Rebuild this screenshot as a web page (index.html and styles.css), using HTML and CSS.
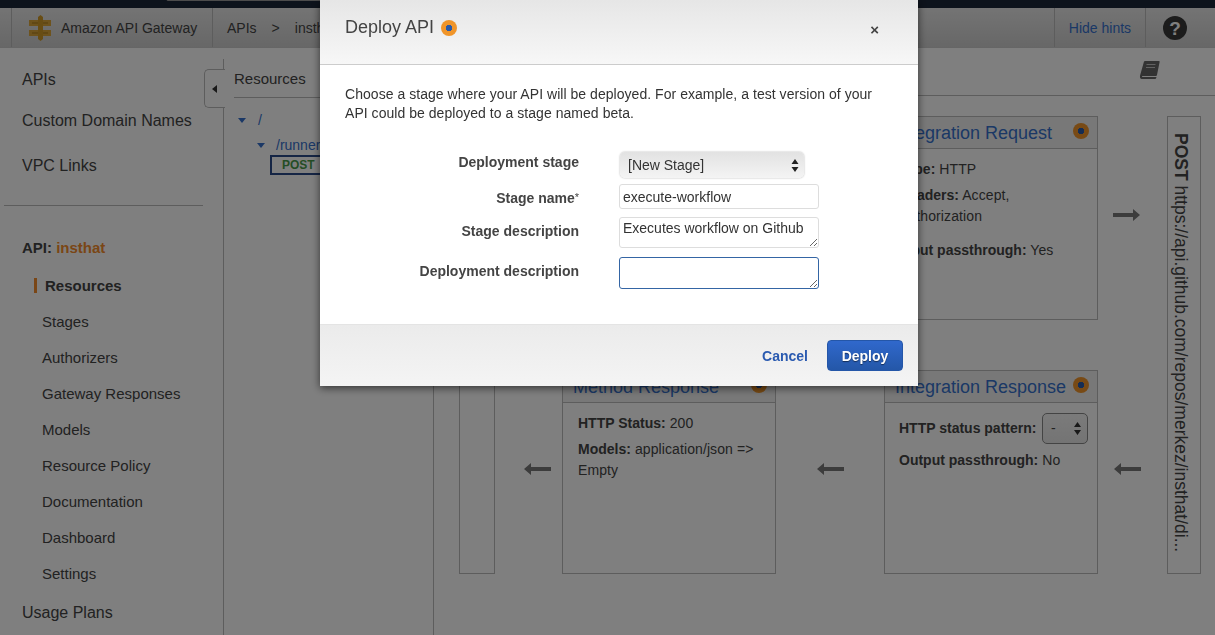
FILE: index.html
```html
<!DOCTYPE html>
<html lang="en">
<head>
  <meta charset="UTF-8" />
  <title>Amazon API Gateway</title>
  <link rel="stylesheet" href="styles.css">
</head>
<body>

  <div class="topbar"><div class="search-edge"></div></div>

  <header class="header">
    <div class="brand">
      <svg class="logo" width="24" height="26" viewBox="0 0 24 26">
        <rect x="1" y="5" width="9" height="6" fill="#dca63a"/>
        <rect x="1" y="15" width="9" height="6" fill="#dca63a"/>
        <rect x="15" y="5" width="8" height="6" fill="#dca63a"/>
        <rect x="15" y="15" width="8" height="6" fill="#dca63a"/>
        <path d="M4 8h16M4 18h16" stroke="#a87c1c" stroke-width="1"/>
        <path d="M10 2l2.500-2L15 2v22l-2.500 2L10 24z" fill="#d09a28"/>
      </svg>
      <span>Amazon API Gateway</span>
    </div>
    <nav class="crumbs"><span>APIs</span><span class="sep">&gt;</span><span>insthat</span></nav>
    <a class="hints">Hide hints</a>
    <div class="help">
      <svg width="24" height="24" viewBox="0 0 24 24">
        <circle cx="12" cy="12" r="12" fill="#383838"/>
        <text x="12" y="18.500" class="help-mark">?</text>
      </svg>
    </div>
  </header>

  <div class="layout">
    <aside class="sidebar">
      <a class="nav-top first">APIs</a>
      <a class="nav-top custom">Custom Domain Names</a>
      <a class="nav-top vpc">VPC Links</a>
      <hr class="nav-rule">
      <div class="api-name">API: <span>insthat</span></div>
      <ul class="sub-nav">
        <li class="active">Resources</li>
        <li>Stages</li>
        <li>Authorizers</li>
        <li>Gateway Responses</li>
        <li>Models</li>
        <li>Resource Policy</li>
        <li>Documentation</li>
        <li>Dashboard</li>
        <li>Settings</li>
      </ul>
      <a class="nav-top usage">Usage Plans</a>
    </aside>

    <section class="resources">
      <div class="collapse-tab">
        <svg width="6" height="8" viewBox="0 0 6 8"><path d="M5 0v8L0 4z" fill="#333"/></svg>
      </div>
      <h3>Resources</h3>
      <ul class="tree">
        <li><i class="caret"></i><a>/</a></li>
        <li class="child"><i class="caret"></i><a>/runners</a></li>
      </ul>
      <div class="method-tag">POST</div>
    </section>

    <main class="main">
      <div class="toolbar">
        <svg width="21" height="20" viewBox="0 0 21 20">
          <path d="M5 1.500Q5.300 1 6 1h14q.8 0 .6 1L18 15q-.2 1-1 1H2q-1 0-.8-1z" fill="#666"/>
          <path d="M1.200 15C.6 17 1 19 3 19h13q1 0 1.200-1l.3-1H4q-1.500 0-1-1z" fill="#666"/>
          <path d="M7.500 4.500h9M7 7.500h9" stroke="#c4c4c4" stroke-width="1.200"/>
        </svg>
      </div>
      <div class="flow">
        <div class="client"></div>
        <div class="arrow a1"><svg width="27" height="12" viewBox="0 0 27 12"><path d="M0 4h20V0l7 6-7 6V8H0z" class="arrow-fill"/></svg></div>
        <div class="card method-request">
          <div class="card-head"><a>Method Request</a><i class="dot"></i></div>
        </div>
        <div class="arrow a2"><svg width="27" height="12" viewBox="0 0 27 12"><path d="M0 4h20V0l7 6-7 6V8H0z" class="arrow-fill"/></svg></div>
        <div class="card integration-request">
          <div class="card-head"><a>Integration Request</a><i class="dot"></i></div>
          <div class="card-body">
            <p><b>Type:</b> HTTP</p>
            <p><b>Headers:</b> Accept,<br>Authorization</p>
            <p class="spaced"><b>Input passthrough:</b> Yes</p>
          </div>
        </div>
        <div class="arrow a3"><svg width="27" height="12" viewBox="0 0 27 12"><path d="M0 4h20V0l7 6-7 6V8H0z" class="arrow-fill"/></svg></div>
        <div class="endpoint"><span><b>POST</b> https://api.github.com/repos/merkez/insthat/di...</span></div>

        <div class="arrow a4"><svg width="27" height="12" viewBox="0 0 27 12"><path d="M27 4H7V0L0 6l7 6V8h20z" class="arrow-fill"/></svg></div>
        <div class="card method-response">
          <div class="card-head"><a>Method Response</a><i class="dot"></i></div>
          <div class="card-body">
            <p><b>HTTP Status:</b> 200</p>
            <p><b>Models:</b> application/json =&gt;<br>Empty</p>
          </div>
        </div>
        <div class="arrow a5"><svg width="27" height="12" viewBox="0 0 27 12"><path d="M27 4H7V0L0 6l7 6V8h20z" class="arrow-fill"/></svg></div>
        <div class="card integration-response">
          <div class="card-head"><a>Integration Response</a><i class="dot"></i></div>
          <div class="card-body">
            <div class="pattern-row"><b>HTTP status pattern:</b>
              <div class="mini-select">-
                <svg width="7" height="13" viewBox="0 0 7 13"><path d="M3.500 0 7 5H0zM3.500 13 0 8h7z" fill="#333"/></svg>
              </div>
            </div>
            <p><b>Output passthrough:</b> No</p>
          </div>
        </div>
        <div class="arrow a6"><svg width="27" height="12" viewBox="0 0 27 12"><path d="M27 4H7V0L0 6l7 6V8h20z" class="arrow-fill"/></svg></div>
      </div>
    </main>
  </div>

  <div class="overlay"></div>

  <div class="modal">
    <div class="modal-head">
      <h2>Deploy API</h2>
      <i class="dot"></i>
      <span class="close">&times;</span>
    </div>
    <div class="modal-body">
      <p class="intro">Choose a stage where your API will be deployed. For example, a test version of your API could be deployed to a stage named beta.</p>
      <form class="deploy-form">
        <label class="row-stage">Deployment stage</label>
        <div class="stage-select row-stage">
          <span>[New Stage]</span>
          <svg width="8" height="13" viewBox="0 0 8 13"><path d="M4 0l3.500 5H.5zM4 13 .5 8h7z" fill="#222"/></svg>
        </div>
        <label class="row-name">Stage name<sup>*</sup></label>
        <input class="field single row-name" type="text" value="execute-workflow">
        <label class="row-desc">Stage description</label>
        <textarea class="field area row-desc">Executes workflow on Github</textarea>
        <label class="row-deploy">Deployment description</label>
        <textarea class="field area focused row-deploy"></textarea>
      </form>
    </div>
    <div class="modal-foot">
      <a class="cancel">Cancel</a>
      <button class="deploy" type="button">Deploy</button>
    </div>
  </div>

</body>
</html>
```

FILE: styles.css
```css
* {
  box-sizing: border-box;
}
html, body {
  height: 635px;
  margin: 0;
  overflow: hidden;
}
body {
  font-family: "Liberation Sans", Arial, sans-serif;
  font-size: 14px;
  color: #444;
  background: #fff;
}
a {
  color: #3670cc;
}

/* top of the console */
.topbar {
  height: 8px;
  background: #1b2638;
  position: relative;
}
.search-edge {
  position: absolute;
  left: 166px;
  top: -4px;
  width: 170px;
  height: 5px;
  border: 1px solid #999;
  border-radius: 2px;
}
.header {
  height: 40px;
  display: flex;
  align-items: center;
  padding-left: 11px;
  background: linear-gradient(#e8e8e8, #cfcfcf);
  border-bottom: 1px solid #ccc;
}
.brand {
  width: 202px;
  height: 100%;
  display: flex;
  align-items: center;
  padding-left: 16px;
  gap: 9px;
  border-left: 1px solid #bbb;
  border-right: 1px solid #bbb;
}
.crumbs {
  flex: 1;
  padding-left: 14px;
  display: flex;
  gap: 15px;
}
.hints {
  width: 92px;
  height: 100%;
  display: flex;
  align-items: center;
  justify-content: center;
  border-left: 1px solid #bbb;
  border-right: 1px solid #bbb;
}
.help {
  width: 69px;
  padding-left: 17px;
  display: flex;
  align-items: center;
}
.help-mark {
  font-family: "Liberation Sans", Arial, sans-serif;
  font-size: 19px;
  font-weight: bold;
  fill: #fff;
  text-anchor: middle;
}

/* page columns */
.layout {
  display: flex;
  height: 587px;
  background: #fff;
}
.sidebar {
  width: 224px;
  flex: none;
  padding-top: 23px;
  position: relative;
}
.sidebar::after {
  content: "";
  position: absolute;
  right: 0;
  top: 11px;
  bottom: 0;
  width: 1px;
  background: #bbb;
}
.nav-top {
  display: block;
  padding-left: 22px;
  font-size: 16px;
  line-height: 18px;
  color: #444;
}
.custom {
  margin-top: 23px;
}
.vpc {
  margin-top: 27px;
}
.nav-rule {
  margin: 30px 21px 0 4px;
  border: 0;
  border-top: 1px solid #bbb;
}
.api-name {
  margin-top: 33px;
  padding-left: 22px;
  font-size: 15px;
  font-weight: bold;
  line-height: 18px;
}
.api-name span {
  color: #f58c2c;
}
.sub-nav {
  list-style: none;
  margin: 20px 0 0;
  padding: 0 0 0 42px;
  font-size: 15px;
}
.sub-nav li {
  height: 36px;
  line-height: 18px;
}
.sub-nav .active {
  font-weight: bold;
  position: relative;
  padding-left: 3px;
}
.sub-nav .active::before {
  content: "";
  position: absolute;
  left: -8px;
  top: 1px;
  width: 3px;
  height: 15px;
  background: #f58c2c;
}
.usage {
  margin-top: 3px;
}

.resources {
  width: 210px;
  flex: none;
  padding-left: 10px;
  position: relative;
  border-right: 1px solid #bbb;
}
.resources h3 {
  margin: 0;
  height: 50px;
  padding-top: 22px;
  font-size: 15px;
  font-weight: normal;
  line-height: 18px;
  border-bottom: 1px solid #bbb;
}
.collapse-tab {
  position: absolute;
  left: -20px;
  top: 21px;
  width: 21px;
  height: 39px;
  display: flex;
  align-items: center;
  padding-left: 7px;
  background: #fff;
  border: 1px solid #bbb;
  border-right: 0;
  border-radius: 5px 0 0 5px;
}
.tree {
  list-style: none;
  margin: 10px 0 0;
  padding: 0 0 0 4px;
}
.tree li {
  height: 24px;
  line-height: 18px;
  display: flex;
  align-items: center;
  gap: 12px;
}
.tree .child {
  height: 25px;
  padding: 1px 0 0 19px;
  gap: 11px;
}
.caret {
  border-left: 4px solid transparent;
  border-right: 4px solid transparent;
  border-top: 5px solid #3670cc;
}
.method-tag {
  width: 120px;
  height: 20px;
  margin: -2px 0 0 36px;
  padding-left: 10px;
  border: 2px solid #2a4a8a;
  font-size: 12px;
  font-weight: bold;
  line-height: 16px;
  color: #4a9a4a;
}

.main {
  flex: 1;
}
.toolbar {
  height: 48px;
  padding: 12px 0 0 705px;
  border-bottom: 1px solid #bbb;
}
.flow {
  display: grid;
  grid-template-columns: 36px 67px 214px 108px 214px 69px 34px;
  grid-template-rows: 204px 50px 204px;
  margin: 20px 0 0 25px;
}
.client {
  grid-column: 1;
  grid-row: 1 / 4;
  border: 1px solid #bbb;
}
.endpoint {
  grid-column: 7;
  grid-row: 1 / 4;
  border: 1px solid #bbb;
  padding: 16px 9px 0 0;
  font-size: 17.500px;
  line-height: 20px;
  white-space: nowrap;
  writing-mode: vertical-rl;
  display: flex;
  align-items: flex-start;
}
.card {
  border: 1px solid #bbb;
}
.method-request {
  grid-column: 3;
  grid-row: 1;
}
.integration-request {
  grid-column: 5;
  grid-row: 1;
}
.method-response {
  grid-column: 3;
  grid-row: 3;
}
.integration-response {
  grid-column: 5;
  grid-row: 3;
}
.integration-request .card-body,
.integration-response .card-body {
  padding-left: 14px;
}
.card-head {
  height: 32px;
  display: flex;
  align-items: center;
  justify-content: space-between;
  padding: 1px 8px 0 10px;
  font-size: 18px;
  white-space: nowrap;
  background: #f0f0f0;
  border-bottom: 1px solid #bbb;
}
.card-head .dot {
  margin-bottom: 4px;
}
.dot {
  width: 16px;
  height: 16px;
  flex: none;
  border-radius: 50%;
  background: radial-gradient(circle, #2a5aa8 0 3px, #f0952a 3.500px);
}
.card-body {
  padding: 10px 15px;
  line-height: 21px;
  letter-spacing: 0.1px;
}
.card-body b {
  letter-spacing: 0;
}
.card-body p {
  margin: 0 0 5px;
}
.card-body .spaced {
  margin-top: 13px;
}
.pattern-row {
  display: flex;
  align-items: center;
  justify-content: space-between;
  margin: 0 -6px 6px 0;
}
.mini-select {
  width: 46px;
  height: 31px;
  display: flex;
  align-items: center;
  justify-content: space-between;
  padding: 0 6px 0 8px;
  border: 1px solid #888;
  border-radius: 5px;
  background: linear-gradient(#f6f6f6, #e8e8e8);
}
.arrow {
  display: flex;
  align-items: center;
  justify-content: center;
  padding-bottom: 6px;
}
.a1 { grid-column: 2; grid-row: 1; padding-left: 17px; }
.a2 { grid-column: 4; grid-row: 1; }
.a3 { grid-column: 6; grid-row: 1; padding-right: 13px; }
.a4 { grid-column: 2; grid-row: 3; padding-left: 17px; }
.a5 { grid-column: 4; grid-row: 3; }
.a6 { grid-column: 6; grid-row: 3; padding-right: 11px; }
.arrow-fill {
  fill: #787878;
}

/* dialog */
.overlay {
  position: fixed;
  inset: 0;
  background: rgba(0, 0, 0, 0.5);
}
.modal {
  position: fixed;
  left: 320px;
  top: 0;
  width: 598px;
  height: 386px;
  background: #fff;
  box-shadow: 0 2px 8px rgba(0, 0, 0, 0.6);
}
.modal-head {
  height: 65px;
  display: flex;
  align-items: center;
  padding: 0 39px 9px 25px;
  background: linear-gradient(#e6e6e6, #f7f7f7);
  border-bottom: 1px solid #ccc;
}
.modal-head h2 {
  margin: 0 7px 0 0;
  font-size: 18px;
  font-weight: normal;
  color: #444;
}
.close {
  margin-left: auto;
  padding-top: 3px;
  font-size: 15px;
  font-weight: bold;
}
.modal-body {
  height: 259px;
  padding: 20px 25px 0;
}
.intro {
  margin: 0;
  width: 540px;
  line-height: 19px;
  letter-spacing: 0.04px;
  color: #333;
}
.deploy-form {
  display: grid;
  grid-template-columns: 234px 200px;
  column-gap: 40px;
  grid-template-rows: 26px 27px 34px 32px;
  row-gap: 6px;
  margin-top: 29px;
}
.deploy-form label {
  text-align: right;
  font-weight: bold;
  line-height: 18px;
  color: #444;
}
.deploy-form sup {
  font-weight: normal;
  font-size: 11px;
  line-height: 0;
  vertical-align: 2px;
}
.row-stage { grid-row: 1; }
.row-name { grid-row: 2; }
.row-desc { grid-row: 3; }
.row-deploy { grid-row: 4; }
label.row-stage { padding-top: 1px; }
label.row-name { padding-top: 5px; }
label.row-desc { padding-top: 5px; }
label.row-deploy { padding-top: 5px; }
.stage-select {
  width: 184px;
  margin-left: 1px;
  display: flex;
  align-items: center;
  justify-content: space-between;
  padding: 0 5px 0 8px;
  border-radius: 5px;
  background: linear-gradient(#e2e2e2, #f4f4f4);
  box-shadow: 0 0 2px #aaa;
  color: #333;
}
.field {
  width: 200px;
  margin: 0;
  padding: 2px 3px;
  border: 1px solid #ddd;
  border-radius: 3px;
  font-family: "Liberation Sans", Arial, sans-serif;
  font-size: 14px;
  color: #333;
  outline: 0;
}
.single {
  height: 25px;
}
.area {
  height: 31px;
}
.focused {
  height: 32px;
  border-color: #3465a4;
}
.modal-foot {
  height: 62px;
  display: flex;
  align-items: center;
  justify-content: flex-end;
  padding: 0 15px 0 0;
  gap: 19px;
  background: linear-gradient(#ebebeb, #f4f4f4);
  border-top: 1px solid #e4e4e4;
}
.cancel {
  font-weight: bold;
  color: #2a5ab0;
}
.deploy {
  width: 76px;
  height: 31px;
  font-family: "Liberation Sans", Arial, sans-serif;
  font-size: 14px;
  font-weight: bold;
  color: #fff;
  border: 1px solid #2456a8;
  border-radius: 4px;
  background: linear-gradient(#3068cc, #2457a8);
  text-shadow: 0 1px 1px rgba(0, 0, 0, 0.5);
}
```
